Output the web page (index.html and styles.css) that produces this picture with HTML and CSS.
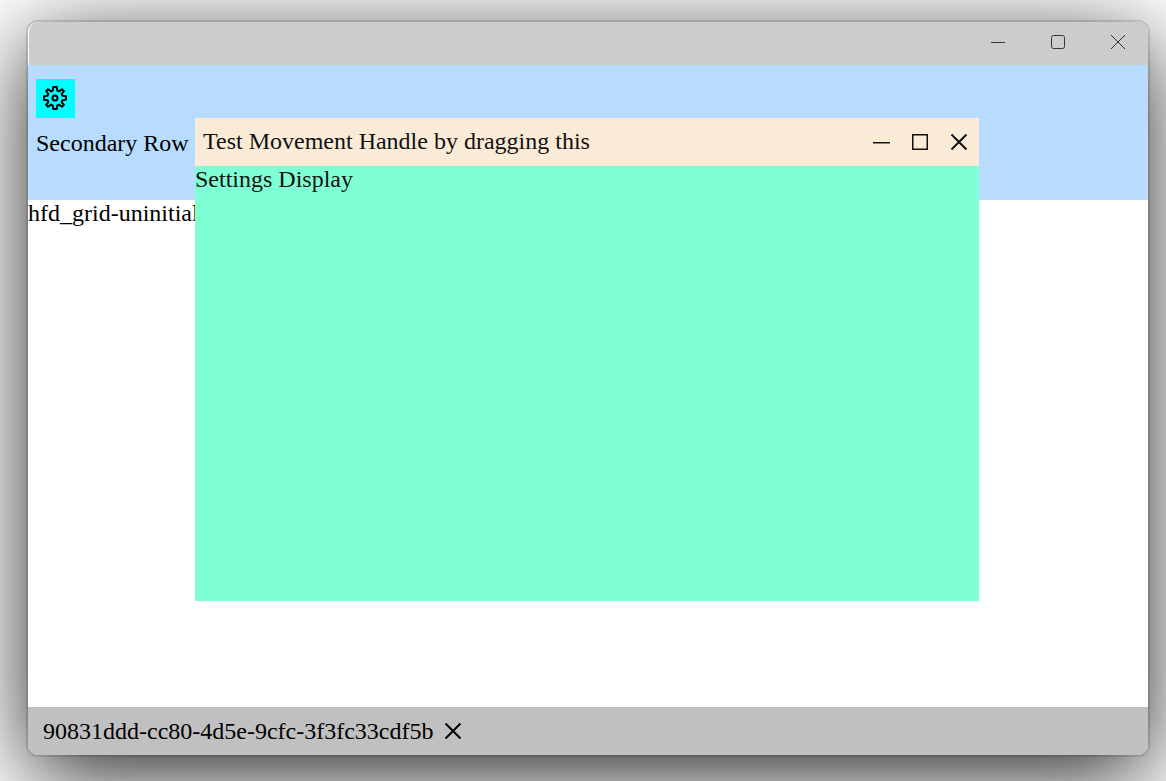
FILE: index.html
```html
<!DOCTYPE html>
<html lang="en">
<head>
<meta charset="utf-8">
<title>Settings Display</title>
<link rel="stylesheet" href="styles.css">
</head>
<body>
<div class="window">
  <header class="titlebar">
    <button class="caption-button" type="button" aria-label="Minimize window"><svg width="16" height="16" viewBox="0 0 16 16"><path d="M1 8.5h14"/></svg></button>
    <button class="caption-button" type="button" aria-label="Maximize window"><svg width="16" height="16" viewBox="0 0 16 16"><rect x="1.5" y="1.5" width="13" height="13" rx="2"/></svg></button>
    <button class="caption-button" type="button" aria-label="Close window"><svg width="16" height="16" viewBox="0 0 16 16"><path d="M1 1l14 14M15 1L1 15"/></svg></button>
  </header>
  <section class="toolbar">
    <button class="settings-button" type="button" aria-label="Settings"><svg width="24" height="24" viewBox="0 0 24 24"><path d="M10.300 1h3.400l.6 3.600 1.700.7 3-2.100 1.800 1.800-2.100 3 .7 1.700 3.600.6v3.400l-3.600.6-.7 1.700 2.100 3-1.800 1.800-3-2.100-1.700.7-.6 3.600h-3.400l-.6-3.600-1.700-.7-3 2.100-1.800-1.800 2.100-3-.7-1.700-3.600-.6v-3.400l3.600-.6.7-1.700-2.100-3 1.800-1.800 3 2.100 1.700-.7z"/><circle cx="12" cy="12" r="2.500"/></svg></button>
    <div class="secondary-row">Secondary Row</div>
  </section>
  <main class="grid-area">hfd_grid-uninitialized</main>
  <footer class="taskbar">
    <span>90831ddd-cc80-4d5e-9cfc-3f3fc33cdf5b</span>
    <button class="icon-button" type="button" aria-label="Close item"><svg width="18" height="18" viewBox="0 0 18 18"><path d="M1.500 1.500l15 15M16.500 1.500l-15 15"/></svg></button>
  </footer>
  <section class="dialog" role="dialog" aria-labelledby="dialog-title">
    <div class="dialog-header">
      <span id="dialog-title" class="dialog-title">Test Movement Handle by dragging this</span>
      <button class="icon-button" type="button" aria-label="Minimize"><svg width="18" height="18" viewBox="0 0 18 18"><path class="thin" d="M1 9.750h17"/></svg></button>
      <button class="icon-button" type="button" aria-label="Maximize"><svg width="18" height="18" viewBox="0 0 18 18"><rect class="thin" x="1.750" y="1.750" width="14.500" height="14.500"/></svg></button>
      <button class="icon-button" type="button" aria-label="Close"><svg width="18" height="18" viewBox="0 0 18 18"><path d="M1.500 1.500l15 15M16.500 1.500l-15 15"/></svg></button>
    </div>
    <div class="dialog-body">Settings Display</div>
  </section>
</div>
</body>
</html>
```
FILE: styles.css
```css
* { box-sizing: border-box; }
body {
  margin: 0;
  height: 100vh;
  padding: 22px 18px 26px 28px;
  overflow: hidden;
  background: #fff;
  color: #000;
  font: 24px/26px "Liberation Serif", "Times New Roman", serif;
}
button {
  display: flex;
  align-items: center;
  justify-content: center;
  margin: 0;
  padding: 0;
  border: 0;
  background: none;
  color: inherit;
}
svg { display: block; fill: none; stroke: currentColor; }
.window {
  position: relative;
  display: flex;
  flex-direction: column;
  height: 100%;
  border-radius: 10px;
  background: #fff;
  box-shadow: 0 0 0 2px rgba(0, 0, 0, 0.12), 0 20px 90px rgba(0, 0, 0, 0.86);
}
.titlebar {
  display: flex;
  justify-content: flex-end;
  height: 43px;
  padding-bottom: 3px;
  border-left: 1px solid #fff;
  border-radius: 10px 10px 0 0;
  background: #ccc;
}
.caption-button { width: 60px; color: #333; }
.toolbar {
  height: 135px;
  padding: 14px 8px;
  background: #b8dcff;
}
.settings-button {
  width: 39px;
  height: 39px;
  padding: 0 1px 1px 0;
  background: #0ff;
}
.settings-button svg { stroke-width: 2; }
.secondary-row { margin-top: 12px; }
.grid-area { flex: 1; }
.taskbar {
  display: flex;
  align-items: center;
  height: 48px;
  padding-left: 15px;
  border-radius: 0 0 10px 10px;
  background: #c0c0c0;
}
.icon-button { width: 39px; height: 39px; }
.icon-button svg { stroke-width: 2; }
.icon-button .thin { stroke-width: 1.5; }
.dialog {
  position: absolute;
  top: 96px;
  left: 167px;
  display: flex;
  flex-direction: column;
  width: 70%;
  height: 65.9%;
  background: #7fffd4;
  color: #111;
}
.dialog-header {
  display: flex;
  align-items: center;
  height: 48px;
  padding: 0 1px 1px 8px;
  background: #faebd7;
}
.dialog-title { flex: 1; padding-bottom: 2px; }
.dialog-body { flex: 1; }
```
